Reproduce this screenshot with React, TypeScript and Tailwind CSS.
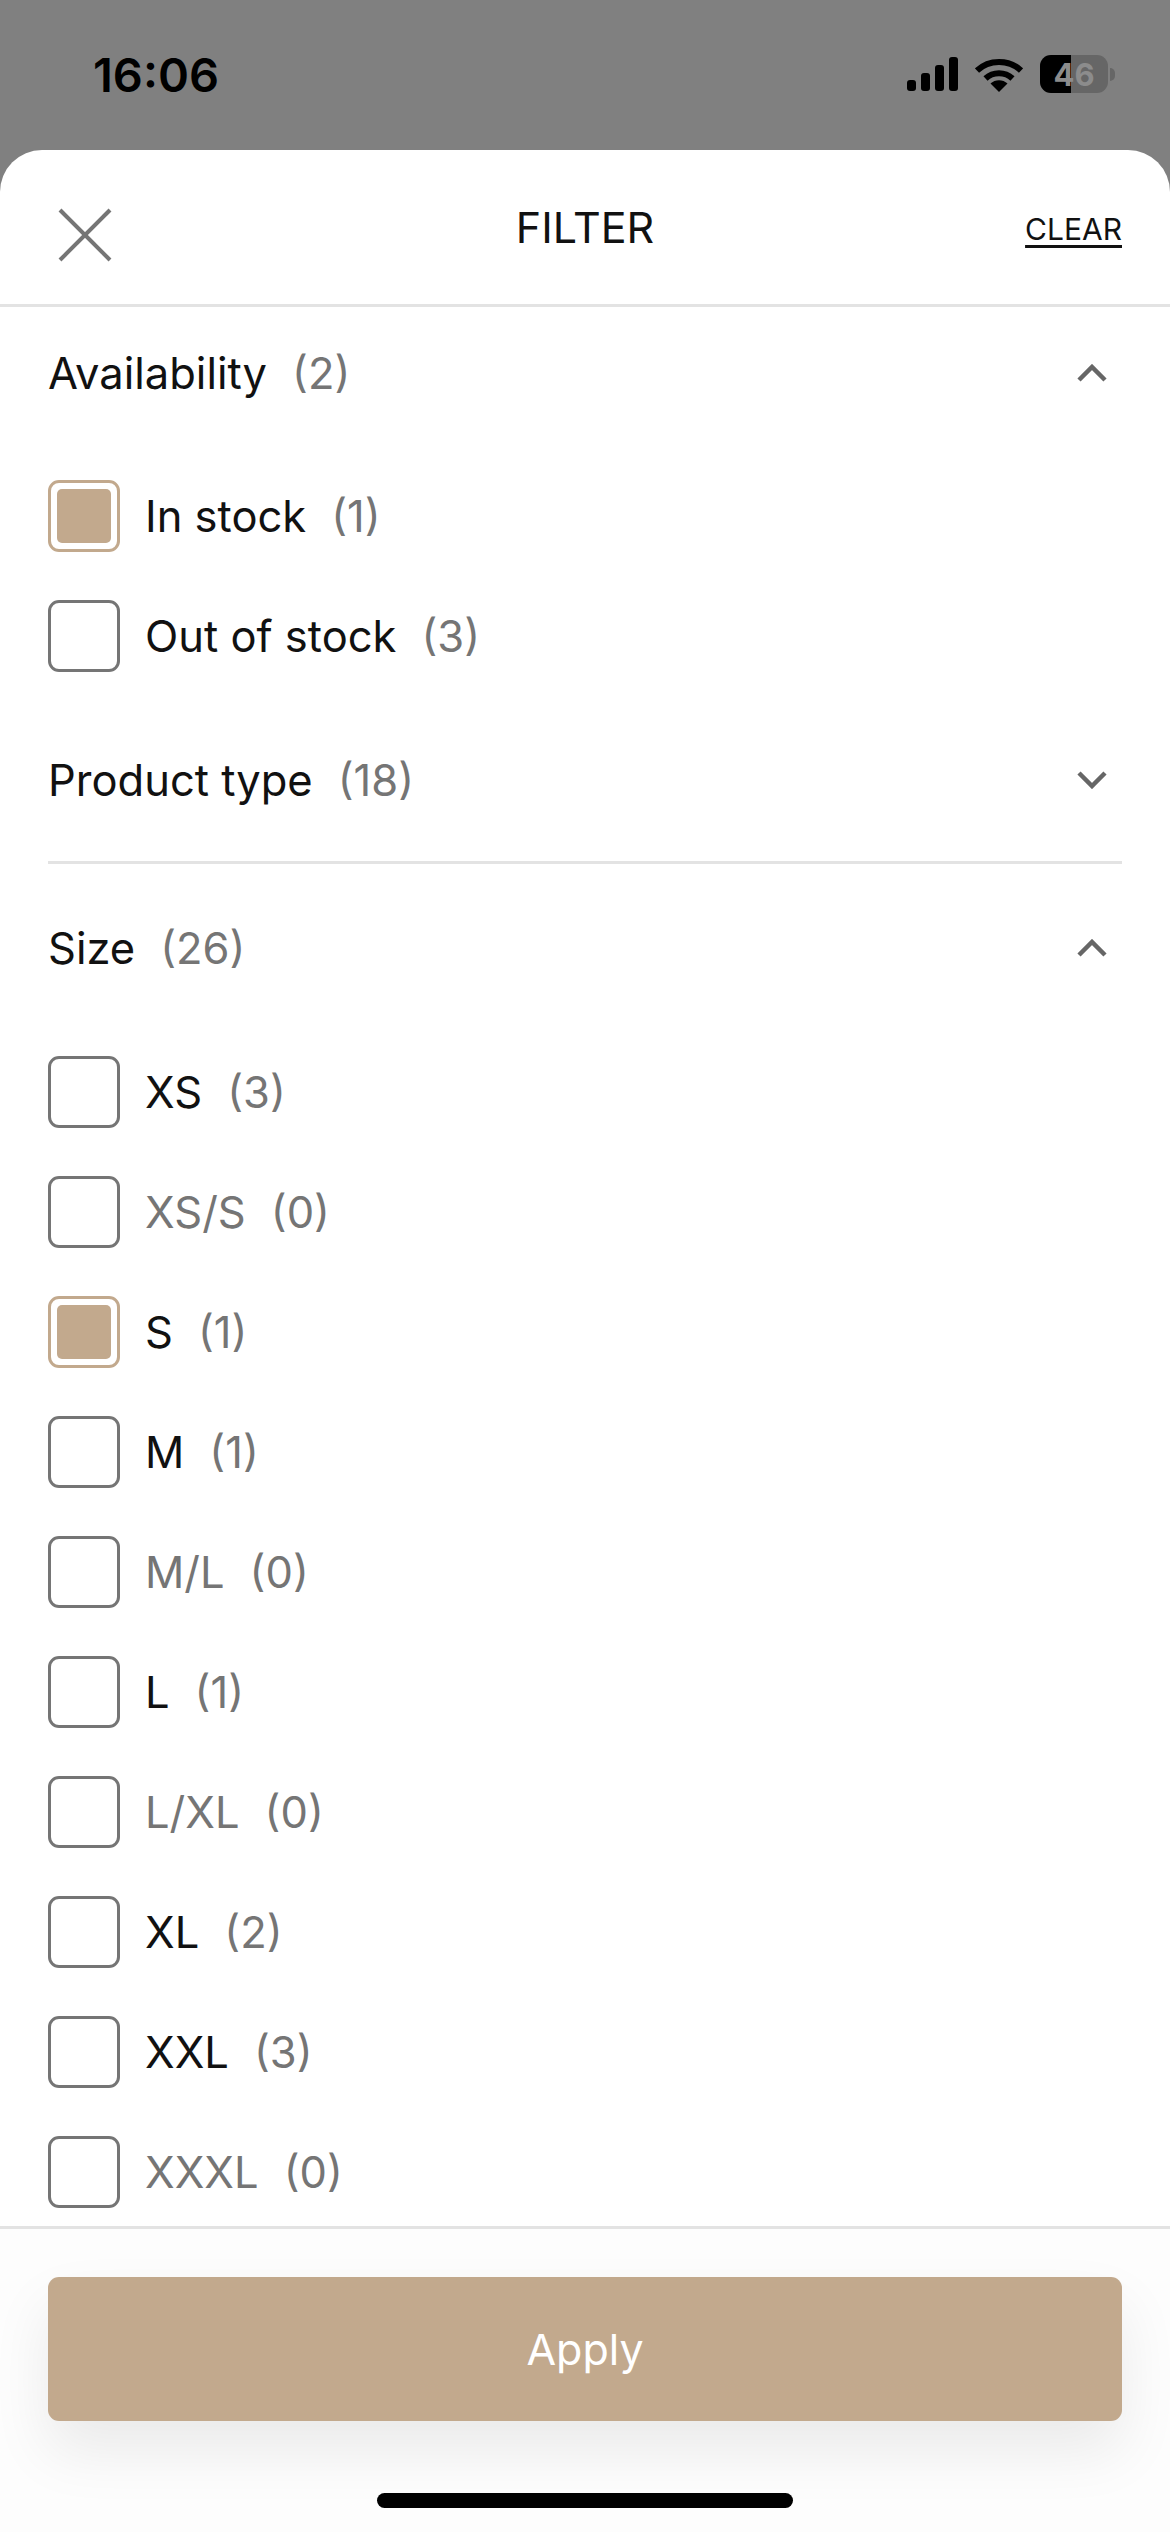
type Option = { label: string; count: number; checked?: boolean };

const availability: Option[] = [
  { label: 'In stock', count: 1, checked: true },
  { label: 'Out of stock', count: 3 },
];

const sizes: Option[] = [
  { label: 'XS', count: 3 },
  { label: 'XS/S', count: 0 },
  { label: 'S', count: 1, checked: true },
  { label: 'M', count: 1 },
  { label: 'M/L', count: 0 },
  { label: 'L', count: 1 },
  { label: 'L/XL', count: 0 },
  { label: 'XL', count: 2 },
  { label: 'XXL', count: 3 },
  { label: 'XXXL', count: 0 },
];

function StatusBar() {
  return (
    <div className="h-[150px] shrink-0 bg-[#808080] flex items-center justify-between pl-[93px] pr-[55px] pb-[2px]">
      <span className="text-[47px] leading-none font-semibold text-black font-['Inter',sans-serif]">16:06</span>
      <div className="flex items-center">
        <svg width="51" height="34" viewBox="0 0 51 34" fill="#000">
          <rect x="0" y="23" width="9" height="11" rx="3" />
          <rect x="14" y="16" width="9" height="18" rx="3" />
          <rect x="28" y="8" width="9" height="26" rx="3" />
          <rect x="42" y="0" width="9" height="34" rx="3" />
        </svg>
        <svg className="ml-[17px]" width="48" height="35" viewBox="0 0 48 35" fill="none" stroke="#000" strokeWidth="6">
          <path d="M2 13.5C14 2 34 2 46 13.5" />
          <path d="M10.5 21.5C18 14.5 30 14.5 37.5 21.5" />
          <path d="M15.5 26.5L24 35L32.5 26.5C28 22 20 22 15.5 26.5Z" fill="#000" stroke="none" />
        </svg>
        <div className="ml-[17px] relative w-[68px] h-[38px] rounded-[11px] bg-[#666666] overflow-hidden">
          <div className="absolute left-0 top-0 bottom-0 w-[31px] bg-black" />
          <span className="absolute inset-0 flex items-center justify-center text-[31px] leading-none font-bold text-[#8c8c8c] font-['Inter',sans-serif]">46</span>
        </div>
        <div className="ml-[2px] w-[5px] h-[13px] rounded-r-full bg-[#666666]" />
      </div>
    </div>
  );
}

function CheckBox({ checked }: { checked?: boolean }) {
  return (
    <div
      className={`w-[72px] h-[72px] shrink-0 rounded-[11px] border-[3px] flex items-center justify-center ${
        checked ? 'border-[#c2a98d]' : 'border-[#757575]'
      }`}
    >
      {checked && <div className="w-[54px] h-[54px] rounded-[5px] bg-[#c2a98d]" />}
    </div>
  );
}

function OptionRow({ option }: { option: Option }) {
  const disabled = option.count === 0;
  return (
    <div className="flex items-center h-[72px]">
      <CheckBox checked={option.checked} />
      <span className={`ml-[25px] ${disabled ? 'text-[#757575]' : 'text-[#111111]'}`}>{option.label}</span>
      <span className="ml-[25px] text-[#757575]">({option.count})</span>
    </div>
  );
}

function Chevron({ open }: { open?: boolean }) {
  return (
    <svg
      className={`ml-auto mr-[15px] ${open ? '' : 'rotate-180'}`}
      width="30"
      height="18"
      viewBox="0 0 30 18"
      fill="none"
      stroke="#666666"
      strokeWidth="4.5"
    >
      <path d="M2 16L15 3L28 16" />
    </svg>
  );
}

function SectionHeader({ title, count, open }: { title: string; count: number; open?: boolean }) {
  return (
    <div className="flex items-center h-[132px]">
      <span className="text-[#111111]">{title}</span>
      <span className="ml-[25px] text-[#757575]">({count})</span>
      <Chevron open={open} />
    </div>
  );
}

export default function App() {
  return (
    <div className="w-[1170px] h-[2532px] flex flex-col bg-[#808080] overflow-hidden font-['Inter',sans-serif]">
      <StatusBar />
      <div className="flex-1 min-h-0 flex flex-col bg-white rounded-t-[42px] overflow-hidden">
        <div className="relative h-[154px] shrink-0 flex items-center justify-center border-b-[3px] border-[#e3e3e3] box-content">
          <svg className="absolute left-[58px] top-[58px]" width="54" height="54" viewBox="0 0 54 54" fill="none" stroke="#757575" strokeWidth="4">
            <path d="M2 2L52 52" />
            <path d="M52 2L2 52" />
          </svg>
          <span className="text-[43px] leading-none text-[#111111]">FILTER</span>
          <span className="absolute right-[48px] top-[60px] text-[30px] leading-[38px] text-[#111111] underline underline-offset-[5px]">CLEAR</span>
        </div>

        <div className="flex-1 min-h-0 overflow-hidden px-[48px] text-[43.5px] leading-[46px]">
          <SectionHeader title="Availability" count={2} open />
          <div className="mt-[41px] flex flex-col gap-[48px]">
            {availability.map((o) => (
              <OptionRow key={o.label} option={o} />
            ))}
          </div>
          <div className="mt-[42px] border-b-[3px] border-[#e3e3e3] pb-[15px]">
            <SectionHeader title="Product type" count={18} />
          </div>
          <div className="mt-[18px]">
            <SectionHeader title="Size" count={26} open />
          </div>
          <div className="mt-[42px] flex flex-col gap-[48px]">
            {sizes.map((o) => (
              <OptionRow key={o.label} option={o} />
            ))}
          </div>
        </div>

        <div className="h-[306px] shrink-0 flex flex-col border-t-[3px] border-[#e3e3e3] bg-[#fdfdfd] px-[48px] pt-[48px]">
          <div className="h-[144px] shrink-0 rounded-[11px] bg-[#c2a98d] flex items-center justify-center text-[43px] leading-none text-white shadow-[0_30px_60px_rgba(0,0,0,0.08)]">
            Apply
          </div>
          <div className="mt-[72px] mx-auto w-[416px] h-[15px] rounded-full bg-black" />
        </div>
      </div>
    </div>
  );
}
